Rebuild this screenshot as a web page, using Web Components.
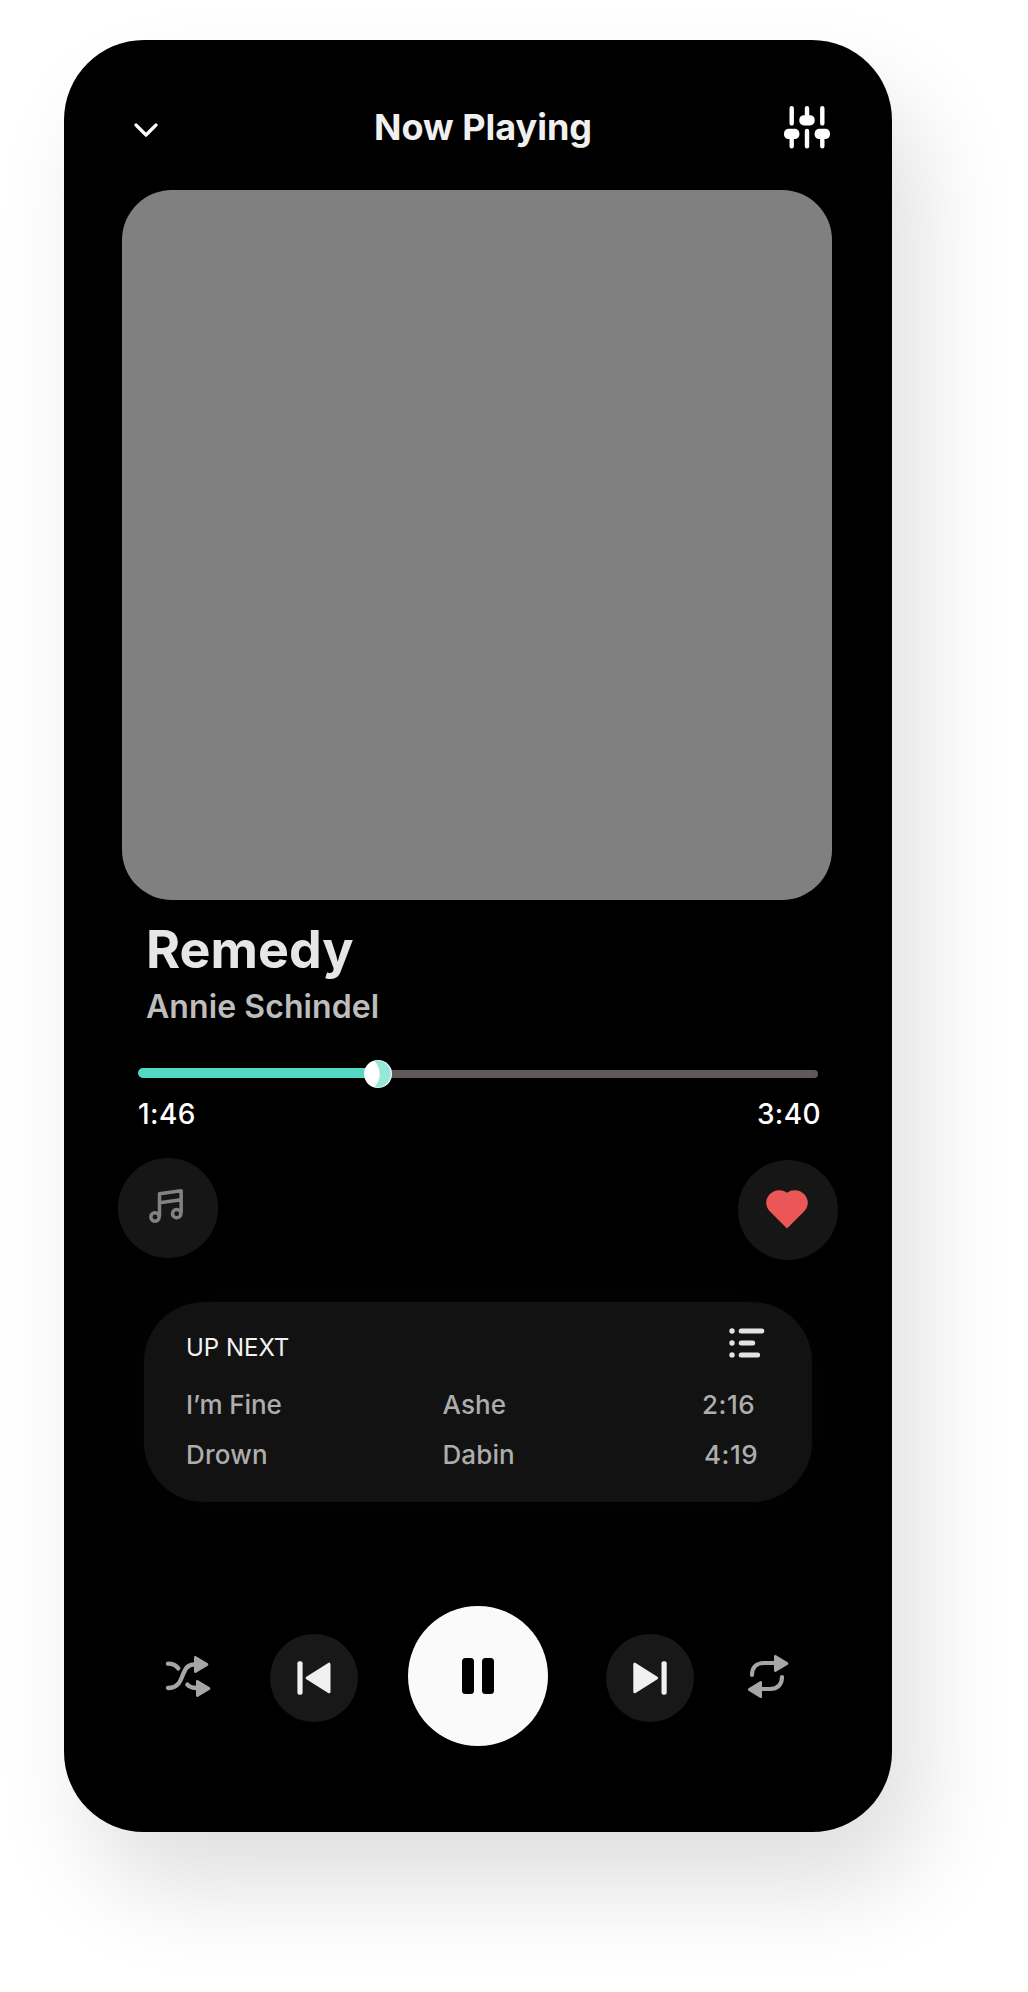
<!DOCTYPE html>
<html lang="en">
<head>
<meta charset="utf-8">
<title>Now Playing</title>
<style>
  html, body { margin: 0; background: #fff; }
  body { font-family: Inter, "Liberation Sans", sans-serif; width: 1028px; height: 1992px; overflow: hidden; }
</style>
</head>
<body>
<music-player>
  <player-header slot="header">Now Playing</player-header>
  <album-art></album-art>
  <track-title artist="Annie Schindel">Remedy</track-title>
  <track-progress elapsed="1:46" total="3:40"></track-progress>
  <track-actions></track-actions>
  <up-next>
    <queue-item artist="Ashe" time="2:16" style="--time-x:516px;--title-spacing:-.1px">I’m Fine</queue-item>
    <queue-item artist="Dabin" time="4:19" style="--time-x:518px;--title-spacing:.2px">Drown</queue-item>
  </up-next>
  <player-controls></player-controls>
</music-player>
<script>
const ICONS = {
  chevron: ['0 0 24 14', 24, 14, '<path d="M2 2l10 10L22 2" fill="none" stroke="#fff" stroke-width="3.2" stroke-linecap="round" stroke-linejoin="round"/>'],
  mixer: ['0 0 46 43', 46, 43, '<g stroke="#fff" stroke-width="4.4" stroke-linecap="round"><path d="M7.7 2.2v15.2M23 2.2V12M38.3 2.2v15.2M7.7 28v12.300M23 25v15.300M38.3 28v12.300"/></g><g fill="#fff"><rect x="15.3" y="9.2" width="15.4" height="10.2" rx="4.6"/><rect x="0" y="22.8" width="15.4" height="10.2" rx="4.6"/><rect x="30.6" y="22.8" width="15.4" height="10.2" rx="4.6"/></g>'],
  note: ['114 144 108 108', 36, 36, '<g fill="none" stroke="#828282" stroke-width="10.5" stroke-linejoin="round"><circle cx="135" cy="231" r="12.6"/><circle cx="200" cy="221" r="12.6"/><path d="M148.500 229V161.500L213.500 152.500V220M148.500 188L213.500 179"/></g>'],
  heart: ['0 0 42 39', 42, 39, '<path d="M21 38.500 4 21.500C-1 16.500-1 9.500 3.500 4.600 8-.5 15.500-1.100 21 2.700 26.500-1.100 34-.5 38.500 4.600 43 9.500 43 16.500 38 21.500Z" fill="#eb5757"/>'],
  list: ['0 0 36 30', 36, 30, '<g fill="#e3e3e3"><circle cx="3" cy="3" r="2.700"/><circle cx="3" cy="15" r="2.700"/><circle cx="3" cy="26.900" r="2.700"/></g><path d="M12.200 3h20.700M12.200 15H23.700M12.200 26.900h16.400" stroke="#e3e3e3" stroke-width="5" stroke-linecap="round"/>'],
  shuffle: ['45 165 138 129', 46, 43, '<g fill="none" stroke="#a6a6a6" stroke-width="13" stroke-linecap="round"><path d="M54 191Q74 191 85 205M54 264C110 264 86 193 134 193M112 254Q120 264 142 264"/></g><g fill="#a6a6a6" stroke="#a6a6a6" stroke-width="8" stroke-linejoin="round"><path d="M136 172 171 193.500 136 215ZM142 244 177 265.500 142 287Z"/></g>'],
  repeat: ['171 159 126 135', 42, 45, '<g fill="none" stroke="#a6a6a6" stroke-width="12.500" stroke-linecap="round"><path d="M186 222C186 198 200 186 222 186H254M276 228C276 252 262 264 240 264H214"/></g><g fill="#a6a6a6" stroke="#a6a6a6" stroke-width="8" stroke-linejoin="round"><path d="M256 166 291 187.500 256 209ZM212 244 178 265.500 212 287Z"/></g>'],
  prev: ['0 0 88 88', 88, 88, '<rect x="27.400" y="27.200" width="5.200" height="33.600" rx="2" fill="#f0f0f0"/><path d="M37.200 44 59 30.200V57.800Z" fill="#f0f0f0" stroke="#f0f0f0" stroke-width="3" stroke-linejoin="round"/>'],
  next: ['0 0 88 88', 88, 88, '<rect x="55.500" y="27.200" width="5.200" height="33.600" rx="2" fill="#f0f0f0"/><path d="M50.600 44 28.800 30.200V57.800Z" fill="#f0f0f0" stroke="#f0f0f0" stroke-width="3" stroke-linejoin="round"/>'],
  pause: ['0 0 32 36', 32, 36, '<rect width="12" height="36" rx="3.500"/><rect x="20" width="12" height="36" rx="3.500"/>']
};

function define(name, html) {
  customElements.define(name, class extends HTMLElement {
    constructor() {
      super();
      this.attachShadow({ mode: 'open' });
      this.shadowRoot.innerHTML = html.replace(/\{(\w+)\}/g, (_, key) => this.getAttribute(key) || '');
    }
  });
}

customElements.define('player-icon', class extends HTMLElement {
  connectedCallback() {
    const root = this.shadowRoot || this.attachShadow({ mode: 'open' });
    const [box, w, h, body] = ICONS[this.getAttribute('name')];
    root.innerHTML = `<style>:host{display:block;flex:none}svg{display:block}</style><svg viewBox="${box}" width="${w}" height="${h}" aria-hidden="true">${body}</svg>`;
  }
});

define('round-button', `<style>
  :host{display:block;flex:none;width:var(--size,100px);height:var(--size,100px)}
  button{all:unset;display:flex;align-items:center;justify-content:center;width:100%;height:100%;border-radius:50%;background:var(--fill,#161616)}
</style><button><slot></slot></button>`);

define('music-player', `<style>
  :host{display:flex;flex-direction:column;box-sizing:border-box;width:828px;height:1792px;margin:40px 0 0 64px;border-radius:80px;background:#000;box-shadow:28px 56px 96px rgba(0,0,0,.125)}
</style><slot name="header"></slot><slot></slot>`);

define('player-header', `<style>
  :host{display:grid;grid-template-columns:240px 1fr 46px;align-items:start;box-sizing:border-box;height:150px;padding:65px 62px 0 70px}
  h1{margin:0;font-size:36px;line-height:44px;font-weight:700;color:#f0f0f0;white-space:nowrap}
  .down{margin-top:18px}.mix{margin-top:1px}
</style><player-icon class="down" name="chevron"></player-icon><h1><slot></slot></h1><player-icon class="mix" name="mixer"></player-icon>`);

define('album-art', `<style>:host{display:block;width:710px;height:710px;margin-left:58px;border-radius:50px;background:#808080}</style>`);

define('track-title', `<style>
  :host{display:block;margin:18px 0 0 82px}
  h2{margin:0;font-size:52px;line-height:64px;font-weight:700;color:#e6e6e6}
  p{margin:5px 0 0;font-size:32px;line-height:40px;font-weight:600;letter-spacing:.08px;color:#bdbdbd}
</style><h2><slot></slot></h2><p>{artist}</p>`);

define('track-progress', `<style>
  :host{display:block;width:683px;margin:33px 0 0 74px}
  svg{display:block}
  div{display:flex;justify-content:space-between;margin-top:9px;font-size:28px;line-height:34px;font-weight:450;letter-spacing:.4px;color:#fff}
</style>
<svg width="680" height="28" viewBox="0 0 680 28">
  <rect y="10" x="2" width="678" height="8" rx="4" fill="#5f5a59"/>
  <path d="M5 8H240V18H5A5 5 0 0 1 5 8Z" fill="#53d9c1"/>
  <circle cx="240" cy="14" r="14" fill="#fff"/>
  <path d="M236.500 .7A13.600 13.600 0 1 1 236.500 27.300C243.500 18.500 243.500 9.500 236.500 .7Z" fill="#98e8d9"/>
</svg>
<div><span>{elapsed}</span><span>{total}</span></div>`);

define('track-actions', `<style>
  :host{display:flex;justify-content:space-between;margin:27px 54px 0;height:102px}
  .like{margin-top:2px}.like player-icon{margin:0 2px 2px 0}.lyrics player-icon{margin:0 4px 4px 0}
</style>
<round-button class="lyrics"><player-icon name="note"></player-icon></round-button>
<round-button class="like"><player-icon name="heart"></player-icon></round-button>`);

define('up-next', `<style>
  :host{display:block;box-sizing:border-box;width:668px;height:200px;margin:42px 0 0 80px;padding:26px 47px 0 42px;border-radius:60px;background:#121212;box-shadow:0 0 80px rgba(255,255,255,.018)}
  header{display:flex;justify-content:space-between;align-items:flex-start;height:52px;font-size:24px;line-height:40px;font-weight:400;color:#f2f2f2}
</style><header><span>UP NEXT</span><player-icon name="list"></player-icon></header><slot></slot>`);

define('queue-item', `<style>
  :host{display:grid;grid-template-columns:256.500px calc(var(--time-x) - 256.500px) 1fr;font-size:26px;line-height:50px;font-weight:450;letter-spacing:.1px;color:#adadad;white-space:nowrap}
  .title{letter-spacing:var(--title-spacing)}
  .time{letter-spacing:.5px}
</style><span class="title"><slot></slot></span><span>{artist}</span><span class="time">{time}</span>`);

define('player-controls', `<style>
  :host{display:flex;align-items:center;height:140px;margin:104px 0 0 101px}
  .prev{margin:4px 50px 0 59px;--size:88px;--fill:#181818}
  .play{--size:140px;--fill:#fafafa}
  .next{margin:4px 53px 0 58px;--size:88px;--fill:#181818}
</style>
<player-icon name="shuffle"></player-icon>
<round-button class="prev"><player-icon name="prev"></player-icon></round-button>
<round-button class="play"><player-icon name="pause"></player-icon></round-button>
<round-button class="next"><player-icon name="next"></player-icon></round-button>
<player-icon name="repeat"></player-icon>`);
</script>
</body>
</html>
